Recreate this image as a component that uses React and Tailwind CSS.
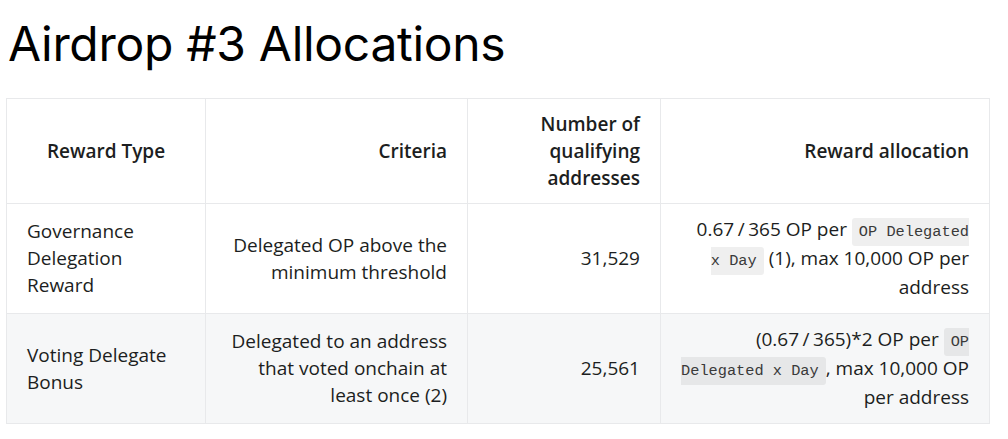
const rows = [
  {
    type: ["Governance", "Delegation", "Reward"],
    criteria: "Delegated OP above the minimum threshold",
    count: "31,529",
    alloc: (
      <>
        0.67<Slash />365 OP per <Code>OP Delegated x Day</Code> (1), max 10,000
        OP per address
      </>
    ),
  },
  {
    type: ["Voting Delegate", "Bonus"],
    criteria: "Delegated to an address that voted onchain at least once (2)",
    count: "25,561",
    alloc: (
      <>
        (0.67<Slash />365)*2 OP per <Code>OP Delegated x Day</Code>, max 10,000
        OP per address
      </>
    ),
  },
];

function Slash() {
  return <span className="mx-[3.5px]">/</span>;
}

function Code({ children }) {
  return (
    <code className="rounded-[3px] bg-[rgba(27,31,35,0.07)] px-[7px] py-[5px] font-['Liberation_Mono',monospace] text-[15.3px] leading-none text-[#3a3a3a]">
      {children}
    </code>
  );
}

export default function App() {
  return (
    <div className="min-h-[439px] bg-white pl-[6px] pr-[19px] text-[#1c1e21]">
      <h1 className="pt-[14px] pl-[2px] font-['Inter',sans-serif] text-[48px] font-normal leading-[60px] tracking-[-0.3px] text-black">
        Airdrop #3 Allocations
      </h1>
      <table className="mt-[24px] w-[983px] table-fixed border-collapse font-['Open_Sans',sans-serif] text-[19px] leading-[27px]">
        <colgroup>
          <col className="w-[199px]" />
          <col className="w-[262px]" />
          <col className="w-[193px]" />
          <col className="w-[329px]" />
        </colgroup>
        <thead>
          <tr>
            <th className="border border-[#e8e9eb] px-[20px] py-[11.5px] text-center font-semibold">
              Reward Type
            </th>
            <th className="border border-[#e8e9eb] px-[20px] py-[11.5px] text-right font-semibold">
              Criteria
            </th>
            <th className="border border-[#e8e9eb] px-[20px] py-[11.5px] text-right font-semibold">
              Number of qualifying addresses
            </th>
            <th className="border border-[#e8e9eb] px-[20px] py-[11.5px] text-right font-semibold">
              Reward allocation
            </th>
          </tr>
        </thead>
        <tbody>
          {rows.map((r, i) => (
            <tr key={i} className={i % 2 === 1 ? "bg-[#f6f7f8]" : "bg-white"}>
              <td className="border border-[#e8e9eb] px-[20px] py-[11px] text-left">
                {r.type.map((t) => (
                  <div key={t}>{t}</div>
                ))}
              </td>
              <td className="border border-[#e8e9eb] px-[20px] py-[11px] text-right">
                {r.criteria}
              </td>
              <td className="border border-[#e8e9eb] px-[20px] py-[11px] text-right">
                {r.count}
              </td>
              <td className="border border-[#e8e9eb] px-[20px] py-[11px] text-right leading-[29px]">
                {r.alloc}
              </td>
            </tr>
          ))}
        </tbody>
      </table>
    </div>
  );
}
